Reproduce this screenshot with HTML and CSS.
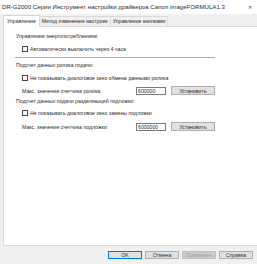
FILE: index.html
```html
<!DOCTYPE html>
<html>
<head>
    <link rel="stylesheet" href="styles.css">
</head>
<body>
    <div class="window">
        <div class="titlebar">
            <div class="title">DR-G2000 Серии Инструмент настройки драйверов Canon imageFORMULA1.3</div>
            <div class="close">✕</div>
        </div>
        <div class="tabs">
            <div class="tab active">Управление</div>
            <div class="tab">Метод изменения настроек</div>
            <div class="tab">Управление кнопками</div>
        </div>
        <div class="panel">
            <div class="heading h-power">Управление энергопотреблением:</div>
            <label class="check c-power"><span class="box"></span>Автоматически выключить через 4 часа</label>
            <div class="separator"></div>
            <div class="heading h-roller">Подсчет данных ролика подачи:</div>
            <label class="check c-roller"><span class="box"></span>Не показывать диалоговое окно обмена данными ролика</label>
            <div class="field f-roller">
                <span class="field-label">Макс. значение счетчика ролика:</span>
                <span class="input">600000</span>
                <span class="button">Установить</span>
            </div>
            <div class="heading h-pad">Подсчет данных подачи разделяющей подложки:</div>
            <label class="check c-pad"><span class="box"></span>Не показывать диалоговое окно замены подложки</label>
            <div class="field f-pad">
                <span class="field-label">Макс. значение счетчика подложки:</span>
                <span class="input">6000000</span>
                <span class="button">Установить</span>
            </div>
        </div>
        <div class="footer">
            <span class="button default">OK</span>
            <span class="button">Отмена</span>
            <span class="button disabled">Применить</span>
            <span class="button">Справка</span>
        </div>
    </div>
</body>
</html>
```

FILE: styles.css
```css
body {
    margin: 0;
    padding: 0;
    background: #f0f0f0;
    font-family: 'Liberation Sans', Arial, sans-serif;
    color: #2b2b2b;
}

.window {
    width: 257px;
    height: 264px;
    background: #f0f0f0;
    display: flex;
    flex-direction: column;
    overflow: hidden;
}

.titlebar {
    height: 13px;
    background: #ffffff;
    display: flex;
    align-items: center;
    justify-content: space-between;
    padding: 0 5px 1px 2px;
}

.title {
    font-size: 6.1px;
    white-space: nowrap;
}

.close {
    font-size: 5px;
    color: #444444;
}

.tabs {
    display: flex;
    align-items: flex-end;
    height: 11px;
    margin-top: 1px;
    padding-left: 4px;
}

.tab {
    height: 9px;
    line-height: 9px;
    padding: 0 2px;
    font-size: 5.2px;
    white-space: nowrap;
    border: 1px solid #d9d9d9;
    border-bottom: none;
    background: #f0f0f0;
    margin-left: -1px;
}

.tab.active {
    height: 11px;
    line-height: 11px;
    background: #ffffff;
    position: relative;
    z-index: 1;
    margin-bottom: -1px;
    padding: 0 3px;
}

.panel {
    width: 245px;
    height: 218px;
    margin-left: 3px;
    background: #ffffff;
    border: 1px solid #d9d9d9;
    padding-left: 12px;
    display: flex;
    flex-direction: column;
    font-size: 5.2px;
}

.heading {
    height: 8px;
    line-height: 8px;
    white-space: nowrap;
}

.h-power {
    margin-top: 5px;
}

.h-roller {
    margin-top: 3px;
}

.h-pad {
    margin-top: 2px;
}

.check {
    display: flex;
    align-items: center;
    height: 8px;
    padding-left: 6px;
    white-space: nowrap;
}

.c-power,
.c-roller {
    margin-top: 5px;
}

.c-pad {
    margin-top: 4px;
}

.box {
    width: 4px;
    height: 4px;
    border: 1px solid #444444;
    background: #ffffff;
    margin-right: 2px;
    flex-shrink: 0;
}

.separator {
    width: 200px;
    height: 1px;
    margin-top: 4px;
    margin-left: -1px;
    background: #b0b0b0;
}

.field {
    display: flex;
    align-items: center;
    height: 9px;
    padding-left: 6px;
}

.f-roller {
    margin-top: 4px;
}

.f-pad {
    margin-top: 5px;
}

.field-label {
    width: 114px;
    white-space: nowrap;
}

.input {
    width: 27px;
    height: 6px;
    line-height: 6px;
    padding-left: 1px;
    border: 1px solid #7a7a7a;
    background: #ffffff;
}

.button {
    display: inline-flex;
    align-items: center;
    justify-content: center;
    box-sizing: border-box;
    width: 44px;
    height: 9px;
    margin-left: 5px;
    background: #e1e1e1;
    border: 1px solid #adadad;
    font-size: 5.2px;
    white-space: nowrap;
}

.footer {
    display: flex;
    justify-content: flex-end;
    gap: 3px;
    margin-top: 5px;
    padding-right: 4px;
}

.footer .button {
    width: 34px;
    height: 8px;
    margin-left: 0;
}

.button.default {
    border-color: #0078d7;
}

.button.disabled {
    background: #cccccc;
    border-color: #bfbfbf;
    color: #a0a0a0;
}
```
